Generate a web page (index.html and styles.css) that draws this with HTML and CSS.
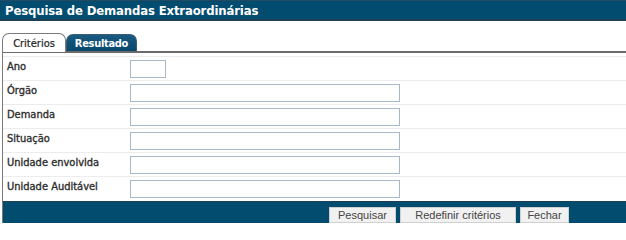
FILE: index.html
```html
<!DOCTYPE html>
<html lang="pt">
<head>
<meta charset="utf-8">
<title>Pesquisa de Demandas Extraordinárias</title>
<link rel="stylesheet" href="styles.css">
</head>
<body>
<div class="page">
  <div class="title-bar"><span class="title">Pesquisa de Demandas Extraordinárias</span></div>
  <div class="tabs">
    <span class="tab tab-active">Critérios</span>
    <span class="tab tab-inactive">Resultado</span>
  </div>
  <div class="panel">
    <div class="rows">
      <div class="row"><span class="label">Ano</span><input class="field field-short" type="text"></div>
      <div class="row"><span class="label">Órgão</span><input class="field" type="text"></div>
      <div class="row"><span class="label">Demanda</span><input class="field" type="text"></div>
      <div class="row"><span class="label">Situação</span><input class="field" type="text"></div>
      <div class="row"><span class="label">Unidade envolvida</span><input class="field" type="text"></div>
      <div class="row"><span class="label">Unidade Auditável</span><input class="field" type="text"></div>
    </div>
    <div class="footer">
      <button class="btn btn-search" type="button">Pesquisar</button>
      <button class="btn btn-reset" type="button">Redefinir critérios</button>
      <button class="btn btn-close" type="button">Fechar</button>
    </div>
  </div>
</div>
</body>
</html>
```
FILE: styles.css
```css
html, body {
  margin: 0;
  padding: 0;
  background: #ffffff;
}
.page {
  width: 626px;
  height: 223px;
  overflow: hidden;
  font-family: "DejaVu Sans Condensed", "DejaVu Sans", sans-serif;
}
.title-bar {
  height: 18px;
  background: #024c70;
  border-top: 1px solid #234a60;
  border-bottom: 2px solid #1f3e50;
  display: flex;
  align-items: center;
  padding-left: 5px;
}
.title {
  color: #ffffff;
  font-weight: bold;
  font-size: 13px;
  letter-spacing: -0.15px;
}
.tabs {
  display: flex;
  align-items: flex-end;
  margin-top: 12px;
  padding-left: 2px;
  height: 18px;
}
.tab {
  display: flex;
  align-items: center;
  justify-content: center;
  box-sizing: border-box;
  font-size: 11px;
  border-radius: 7px 7px 0 0;
}
.tab-active {
  width: 64px;
  height: 19px;
  margin-bottom: -1px;
  background: #ffffff;
  color: #222222;
  border: 1px solid #7a7a7a;
  border-bottom: none;
  position: relative;
  z-index: 1;
  -webkit-text-stroke: 0.2px #222222;
}
.tab-inactive {
  width: 71px;
  height: 17px;
  background: linear-gradient(#1a5a80, #08486c);
  color: #ffffff;
  font-weight: bold;
  letter-spacing: -0.3px;
  border: 1px solid #3a5f75;
  border-bottom: none;
}
.panel {
  margin-left: 2px;
  border-left: 1px solid #7a7a7a;
  border-top: 2px solid #6a6a6a;
  padding-top: 3px;
}
.row {
  display: flex;
  align-items: center;
  height: 23px;
  border-top: 1px solid #ececec;
}
.label {
  width: 123px;
  padding-left: 4px;
  font-size: 11px;
  color: #2e2e2e;
  -webkit-text-stroke: 0.35px #2e2e2e;
  margin-top: -4px;
}
.field {
  box-sizing: border-box;
  width: 270px;
  height: 18px;
  margin: 0;
  padding: 0;
  border: 1px solid #a4b9cb;
  background: #ffffff;
}
.field-short {
  width: 36px;
}
.footer {
  display: flex;
  gap: 4px;
  height: 22px;
  margin-top: 1px;
  background: #024c70;
  padding-left: 326px;
  padding-top: 5px;
  box-sizing: border-box;
  border-top: 1px solid #1f3e50;
}
.btn {
  box-sizing: border-box;
  height: 16px;
  margin: 0;
  padding: 0;
  font-family: "Liberation Sans", Arial, sans-serif;
  font-size: 11px;
  color: #444444;
  background: #f1f1f1;
  border: 1px solid #d0d0d0;
  border-radius: 0;
}
.btn-search { width: 67px; }
.btn-reset { width: 116px; }
.btn-close { width: 49px; }
```
